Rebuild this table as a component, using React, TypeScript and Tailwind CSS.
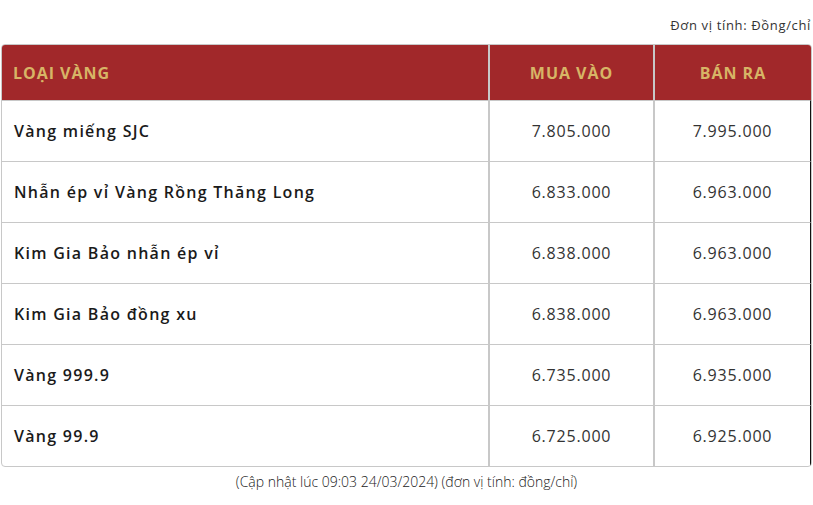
import React from 'react';

const rows = [
  { name: 'Vàng miếng SJC', buy: '7.805.000', sell: '7.995.000' },
  { name: 'Nhẫn ép vỉ Vàng Rồng Thăng Long', buy: '6.833.000', sell: '6.963.000' },
  { name: 'Kim Gia Bảo nhẫn ép vỉ', buy: '6.838.000', sell: '6.963.000' },
  { name: 'Kim Gia Bảo đồng xu', buy: '6.838.000', sell: '6.963.000' },
  { name: 'Vàng 999.9', buy: '6.735.000', sell: '6.935.000' },
  { name: 'Vàng 99.9', buy: '6.725.000', sell: '6.925.000' },
];

export default function App() {
  return (
    <div className="w-[813px] h-[505px] bg-white text-[#222] font-['Open_Sans',sans-serif]">
      <div className="pt-[16px] pr-[2px] text-right text-[13px] leading-[18px] tracking-[0.05em] text-[#333]">
        Đơn vị tính: Đồng/chỉ
      </div>

      <div className="mt-[10px] ml-[1px] w-[811px] border border-[#c8c8c8] rounded-[4px] overflow-hidden">
        {/* header */}
        <div className="grid grid-cols-[488px_165px_1fr] h-[55px] bg-[#a1282a] text-[#d7b566] font-bold text-[16px] tracking-[0.06em]">
          <div className="flex items-center pl-[11px] border-r-2 border-[#c8c8c8]">LOẠI VÀNG</div>
          <div className="flex items-center justify-center border-r-2 border-[#c8c8c8]">MUA VÀO</div>
          <div className="flex items-center justify-center">BÁN RA</div>
        </div>

        {rows.map((r) => (
          <div
            key={r.name}
            className="grid grid-cols-[488px_165px_1fr] h-[61px] border-t border-[#c8c8c8] border-r border-r-[#111]"
          >
            <div className="flex items-center pl-[12px] border-r-2 border-[#c8c8c8] font-semibold text-[16px] tracking-[0.08em] text-[#1a1a1a]">
              {r.name}
            </div>
            <div className="flex items-center justify-center border-r-2 border-[#c8c8c8] text-[16px] tracking-[0.05em] text-[#333]">
              {r.buy}
            </div>
            <div className="flex items-center justify-center text-[16px] tracking-[0.05em] text-[#333]">{r.sell}</div>
          </div>
        ))}
      </div>

      <div className="mt-[6px] text-center text-[14px] leading-[18px] font-light text-[#222]">
        (Cập nhật lúc 09:03 24/03/2024) (đơn vị tính: đồng/chỉ)
      </div>
    </div>
  );
}
